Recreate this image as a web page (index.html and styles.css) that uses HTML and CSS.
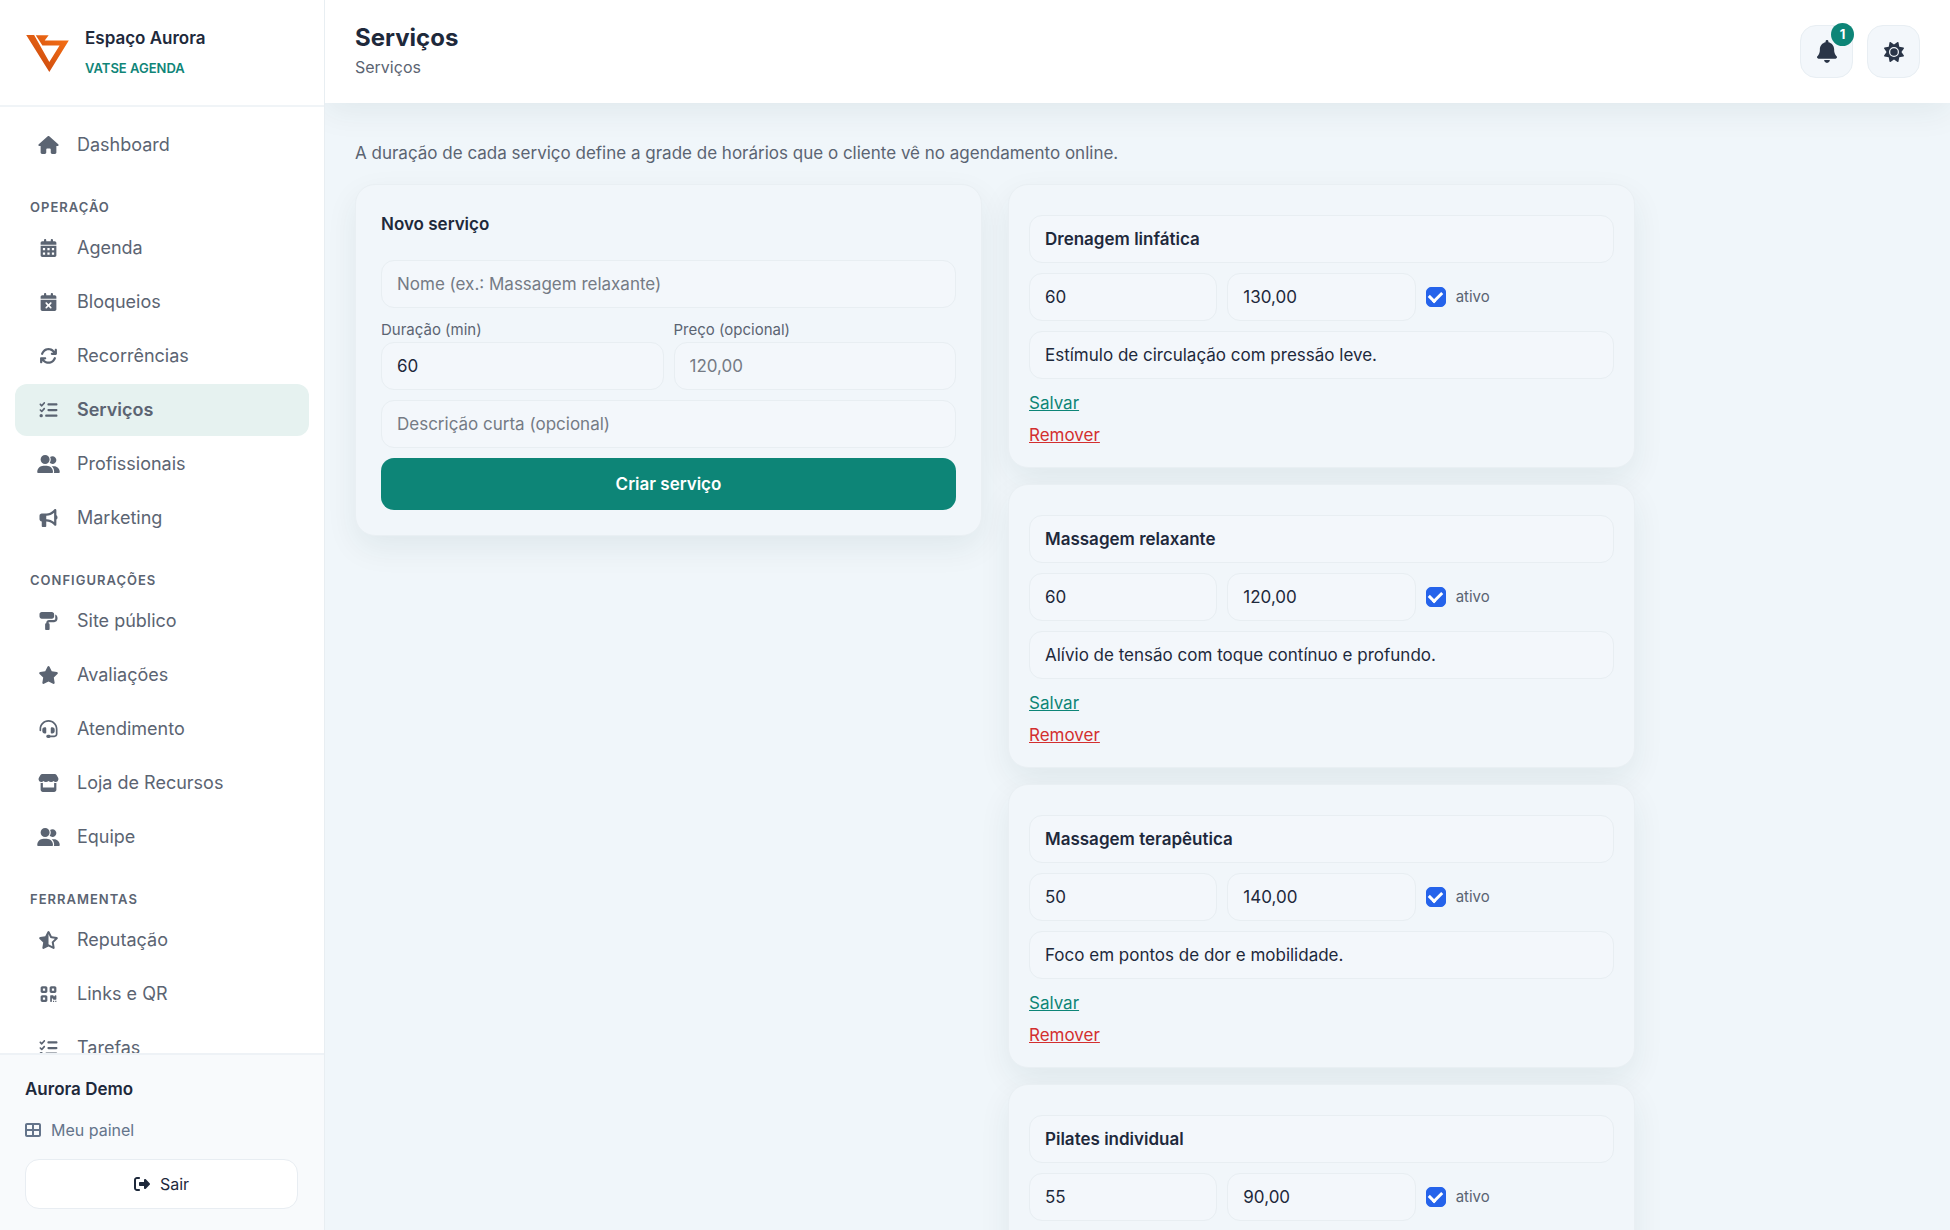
FILE: index.html
```html
<!DOCTYPE html>
<html lang="pt-BR">
<head>
  <meta charset="UTF-8" />
  <meta name="viewport" content="width=device-width, initial-scale=1" />
  <title>Serviços - Espaço Aurora</title>
  <link rel="stylesheet" href="styles.css">
</head>
<body>
  <!-- Icons -->
  <svg class="sprite" aria-hidden="true">
    <symbol id="i-home" viewBox="0 0 576 512"><path d="M575.8 255.5c0 18-15 32.1-32 32.1h-32l.7 160.2c0 2.7-.2 5.4-.5 8.1V472c0 22.1-17.9 40-40 40H392c-22.1 0-40-17.9-40-40V384c0-17.7-14.3-32-32-32H256c-17.7 0-32 14.3-32 32v88c0 22.1-17.9 40-40 40H104c-22.1 0-40-17.9-40-40V287.6H32c-18 0-32-14-32-32.1c0-9 3-17 10-24L266.4 8c7-7 15-8 22-8s15 2 21 7L564.8 231.5c8 7 12 15 11 24z"/></symbol>
    <symbol id="i-calendar" viewBox="0 0 448 512"><path fill-rule="evenodd" d="M128 0c17.7 0 32 14.3 32 32V64H288V32c0-17.7 14.3-32 32-32s32 14.3 32 32V64h48c26.5 0 48 21.5 48 48v48H0V112C0 85.5 21.5 64 48 64H96V32c0-17.7 14.3-32 32-32zM0 192H448V464c0 26.5-21.5 48-48 48H48c-26.5 0-48-21.5-48-48V192zM64 256v64h64v-64zM192 256v64h64v-64zM320 256v64h64v-64zM64 384v64h64v-64zM192 384v64h64v-64zM320 384v64h64v-64z"/></symbol>
    <symbol id="i-calendar-x" viewBox="0 0 448 512"><path fill-rule="evenodd" d="M128 0c17.7 0 32 14.3 32 32V64H288V32c0-17.7 14.3-32 32-32s32 14.3 32 32V64h48c26.5 0 48 21.5 48 48v48H0V112C0 85.5 21.5 64 48 64H96V32c0-17.7 14.3-32 32-32zM0 192H448V464c0 26.5-21.5 48-48 48H48c-26.5 0-48-21.5-48-48V192zM305 305c9.4-9.4 9.4-24.6 0-33.9s-24.6-9.4-33.9 0l-47 47-47-47c-9.4-9.4-24.6-9.4-33.9 0s-9.4 24.6 0 33.9l47 47-47 47c-9.4 9.4-9.4 24.6 0 33.9s24.6 9.4 33.9 0l47-47 47 47c9.4 9.4 24.6 9.4 33.9 0s9.4-24.6 0-33.9l-47-47 47-47z"/></symbol>
    <symbol id="i-rotate" viewBox="0 0 512 512"><path d="M105.1 202.6c7.7-21.8 20.2-42.3 37.8-59.8c62.5-62.5 163.8-62.5 226.3 0L386.3 160H352c-17.7 0-32 14.3-32 32s14.3 32 32 32H463.9c17.7 0 32-14.3 32-32V80c0-17.7-14.3-32-32-32s-32 14.3-32 32v35.2L414.4 97.6c-87.5-87.5-229.3-87.5-316.8 0C73.2 122 55.6 150.7 44.8 181.4c-5.9 16.7 2.9 34.9 19.5 40.8s34.9-2.9 40.8-19.5zM39 289.3c-5 1.5-9.8 4.2-13.7 8.2c-4 4-6.7 8.8-8.1 14c-.3 1.2-.6 2.5-.8 3.8c-.3 1.7-.4 3.4-.4 5.1V432c0 17.7 14.3 32 32 32s32-14.3 32-32V396.9l17.6 17.5c87.5 87.4 229.3 87.4 316.7 0c24.4-24.4 42.1-53.1 52.9-83.8c5.9-16.7-2.9-34.9-19.5-40.8s-34.9 2.9-40.8 19.5c-7.7 21.8-20.2 42.3-37.8 59.8c-62.5 62.5-163.8 62.5-226.3 0L125.6 352H160c17.7 0 32-14.3 32-32s-14.3-32-32-32H48.4c-1.6 0-3.2 .1-4.8 .3s-3.1 .5-4.6 1z"/></symbol>
    <symbol id="i-list" viewBox="0 0 512 512"><path d="M152.1 38.2c9.9 8.9 10.7 24 1.8 33.9l-72 80c-4.4 4.9-10.6 7.8-17.2 7.9s-12.9-2.4-17.6-7L7 113C-2.3 103.6-2.3 88.4 7 79s24.6-9.4 33.9 0l22.1 22.1 55.1-61.2c8.9-9.9 24-10.7 33.9-1.8zm0 160c9.9 8.9 10.7 24 1.8 33.9l-72 80c-4.4 4.9-10.6 7.8-17.2 7.9s-12.9-2.4-17.6-7L7 273c-9.4-9.4-9.4-24.6 0-33.9s24.6-9.4 33.9 0l22.1 22.1 55.1-61.2c8.9-9.9 24-10.7 33.9-1.8zM224 96c0-17.7 14.3-32 32-32H480c17.7 0 32 14.3 32 32s-14.3 32-32 32H256c-17.7 0-32-14.3-32-32zm0 160c0-17.7 14.3-32 32-32H480c17.7 0 32 14.3 32 32s-14.3 32-32 32H256c-17.7 0-32-14.3-32-32zM160 416c0-17.7 14.3-32 32-32H480c17.7 0 32 14.3 32 32s-14.3 32-32 32H192c-17.7 0-32-14.3-32-32zM48 368a48 48 0 1 1 0 96 48 48 0 1 1 0-96z"/></symbol>
    <symbol id="i-users" viewBox="0 0 640 512"><path d="M96 128a128 128 0 1 1 256 0A128 128 0 1 1 96 128zM0 482.3C0 383.8 79.8 304 178.3 304h91.4C368.2 304 448 383.8 448 482.3c0 16.4-13.3 29.7-29.7 29.7H29.7C13.3 512 0 498.7 0 482.3zM609.3 512H471.4c5.4-9.4 8.6-20.3 8.6-32v-8c0-60.7-27.1-115.2-69.8-151.8c2.4-.1 4.7-.2 7.1-.2h61.4C567.8 320 640 392.2 640 481.3c0 17-13.8 30.7-30.7 30.7zM432 256c-31 0-59-12.6-79.3-32.9C372.4 196.5 384 163.6 384 128c0-26.8-6.6-52.1-18.3-74.3C384.3 40.1 407.2 32 432 32c61.9 0 112 50.1 112 112s-50.1 112-112 112z"/></symbol>
    <symbol id="i-bullhorn" viewBox="0 0 512 512"><path d="M480 32c0-12.9-7.8-24.6-19.8-29.6s-25.7-2.2-34.9 6.9L381.7 53c-48 48-113.1 75-181 75H64c-35.3 0-64 28.7-64 64v96c0 35.3 28.7 64 64 64v128c0 17.7 14.3 32 32 32h64c17.7 0 32-14.3 32-32V352h8.7c67.9 0 133 27 181 75l43.6 43.6c9.2 9.2 22.9 11.9 34.9 6.9s19.8-16.6 19.8-29.6V300.4c18.6-8.8 32-32.5 32-60.4s-13.4-51.6-32-60.4V32zm-64 76.7V371.3C357.2 317.8 280.5 288 200.7 288H192V192h8.7c79.8 0 156.5-29.8 215.3-83.3z"/></symbol>
    <symbol id="i-roller" viewBox="0 0 512 512"><path d="M0 64C0 28.7 28.7 0 64 0H352c35.3 0 64 28.7 64 64v64c0 35.3-28.7 64-64 64H64c-35.3 0-64-28.7-64-64V64zM160 352c0-17.7 14.3-32 32-32V304c0-44.2 35.8-80 80-80H416c17.7 0 32-14.3 32-32V69.5c37.3 13.2 64 48.7 64 90.5v32c0 53-43 96-96 96H272c-8.8 0-16 7.2-16 16v16c17.7 0 32 14.3 32 32V480c0 17.7-14.3 32-32 32H192c-17.7 0-32-14.3-32-32V352z"/></symbol>
    <symbol id="i-star" viewBox="0 0 576 512"><path d="M316.9 18C311.6 7 300.4 0 288.1 0s-23.4 7-28.8 18L195 150.3 51.4 171.5c-12 1.8-22 10.2-25.7 21.7s-.7 24.2 7.9 32.7L137.8 329 113.2 474.7c-2 12 3 24.2 12.9 31.3s23 8 33.8 2.3l128.3-68.5 128.3 68.5c10.8 5.7 23.9 4.9 33.8-2.3s14.9-19.3 12.9-31.3L438.5 329 542.7 225.9c8.6-8.5 11.7-21.2 7.9-32.7s-13.7-19.9-25.7-21.7L381.2 150.3 316.9 18z"/></symbol>
    <symbol id="i-star-half" viewBox="0 0 576 512"><path fill-rule="evenodd" d="M316.9 18C311.6 7 300.4 0 288.1 0s-23.4 7-28.8 18L195 150.3 51.4 171.5c-12 1.8-22 10.2-25.7 21.7s-.7 24.2 7.9 32.7L137.8 329 113.2 474.7c-2 12 3 24.2 12.9 31.3s23 8 33.8 2.3l128.3-68.5 128.3 68.5c10.8 5.7 23.9 4.9 33.8-2.3s14.9-19.3 12.9-31.3L438.5 329 542.7 225.9c8.6-8.5 11.7-21.2 7.9-32.7s-13.7-19.9-25.7-21.7L381.2 150.3 316.9 18zM288 376.4l26.5 14 85.2 45.5-16.5-97.6-4.8-28.7 20.7-20.5 70.1-69.3-96.1-14.2-29.3-4.3-12.9-26.6L288 86.9z"/></symbol>
    <symbol id="i-headset" viewBox="0 0 512 512"><path d="M256 48C141.1 48 48 141.1 48 256v40c0 13.3-10.7 24-24 24s-24-10.7-24-24V256C0 114.6 114.6 0 256 0S512 114.6 512 256V400.1c0 48.6-39.4 88-88.1 88L313.6 488c-8.3 14.3-23.8 24-41.6 24H240c-26.5 0-48-21.5-48-48s21.5-48 48-48h32c17.8 0 33.3 9.7 41.6 24l110.4 .1c22.1 0 40-17.9 40-40V256c0-114.9-93.1-208-208-208zM144 208h16c17.7 0 32 14.3 32 32V352c0 17.7-14.3 32-32 32H144c-35.3 0-64-28.7-64-64V272c0-35.3 28.7-64 64-64zm224 0c35.3 0 64 28.7 64 64v48c0 35.3-28.7 64-64 64H352c-17.7 0-32-14.3-32-32V240c0-17.7 14.3-32 32-32h16z"/></symbol>
    <symbol id="i-store" viewBox="0 0 576 512"><path fill-rule="evenodd" d="M112 0H464c24 0 40 8 52 28l42 70c30 52 2 118-58 126c-28 3-52-8-68-26c-17 18-42 28-72 26c-28 0-53-10-72-28c-19 18-44 28-72 28c-30 2-55-8-72-26c-16 18-40 29-68 26c-60-8-88-74-58-126l42-70C72 8 88 0 112 0zM64 252c22 7 42 6 64 0V384H448V252c22 6 42 7 64 0V448c0 35-29 64-64 64H128c-35 0-64-29-64-64z"/></symbol>
    <symbol id="i-qr" viewBox="0 0 448 512"><path fill-rule="evenodd" d="M48 32h96c26 0 48 22 48 48v96c0 26-22 48-48 48H48c-26 0-48-22-48-48V80c0-26 22-48 48-48zM64 96v64h64V96zM304 32h96c26 0 48 22 48 48v96c0 26-22 48-48 48h-96c-26 0-48-22-48-48V80c0-26 22-48 48-48zM320 96v64h64V96zM48 288h96c26 0 48 22 48 48v96c0 26-22 48-48 48H48c-26 0-48-22-48-48v-96c0-26 22-48 48-48zM64 352v64h64v-64zM272 288h80c9 0 16 7 16 16v16h32v-16c0-9 7-16 16-16h16c9 0 16 7 16 16v96c0 9-7 16-16 16h-64c-9 0-16-7-16-16v-16h-32v80c0 9-7 16-16 16h-16c-9 0-16-7-16-16V304c0-9 7-16 16-16zM352 448h32v32h-32zM416 448h32v32h-32z"/></symbol>
    <symbol id="i-table" viewBox="0 0 512 512"><path fill-rule="evenodd" d="M448 96V224H288V96H448zm0 192V416H288V288H448zM224 224H64V96H224V224zM64 288H224V416H64V288zM64 32C28.7 32 0 60.7 0 96V416c0 35.3 28.7 64 64 64H448c35.3 0 64-28.7 64-64V96c0-35.3-28.7-64-64-64H64z"/></symbol>
    <symbol id="i-exit" viewBox="0 0 512 512"><path d="M377.9 105.9L500.7 228.7c7.2 7.2 11.3 17.1 11.3 27.3s-4.1 20.1-11.3 27.3L377.9 406.1c-6.4 6.4-15 9.9-24 9.9c-18.7 0-33.9-15.2-33.9-33.9l0-62.1-128 0c-17.7 0-32-14.3-32-32l0-64c0-17.7 14.3-32 32-32l128 0 0-62.1c0-18.7 15.2-33.9 33.9-33.9c9 0 17.6 3.6 24 9.9zM160 96L96 96c-17.7 0-32 14.3-32 32l0 256c0 17.7 14.3 32 32 32l64 0c17.7 0 32 14.3 32 32s-14.3 32-32 32l-64 0c-53 0-96-43-96-96L0 128C0 75 43 32 96 32l64 0c17.7 0 32 14.3 32 32s-14.3 32-32 32z"/></symbol>
    <symbol id="i-bell" viewBox="0 0 448 512"><path d="M224 0c-17.7 0-32 14.3-32 32V51.2C119 66 64 130.6 64 208v18.8c0 47-17.3 92.4-48.5 127.6l-7.4 8.3c-8.4 9.4-10.4 22.9-5.3 34.4S19.4 416 32 416H416c12.6 0 24-7.4 29.2-18.9s3.1-25-5.3-34.4l-7.4-8.3C401.3 319.2 384 273.9 384 226.8V208c0-77.4-55-142-128-156.8V32c0-17.7-14.3-32-32-32zm45.3 493.3c12-12 18.7-28.3 18.7-45.3H160c0 17 6.7 33.3 18.7 45.3s28.3 18.7 45.3 18.7s33.3-6.7 45.3-18.7z"/></symbol>
    <symbol id="i-sun" viewBox="0 0 512 512"><path d="M361.5 1.2c5 2.1 8.6 6.6 9.6 11.9L391 121l107.9 19.8c5.3 1 9.8 4.6 11.9 9.6s1.5 10.7-1.6 15.2L446.9 256l62.3 90.3c3.1 4.5 3.7 10.2 1.6 15.2s-6.6 8.6-11.9 9.6L391 391 371.1 498.9c-1 5.3-4.6 9.8-9.6 11.9s-10.7 1.5-15.2-1.6L256 446.9l-90.3 62.3c-4.5 3.1-10.2 3.7-15.2 1.6s-8.6-6.6-9.6-11.9L121 391 13.1 371.1c-5.3-1-9.8-4.6-11.9-9.6s-1.5-10.7 1.6-15.2L65.1 256 2.8 165.7c-3.1-4.5-3.7-10.2-1.6-15.2s6.6-8.6 11.9-9.6L121 121 140.9 13.1c1-5.3 4.6-9.8 9.6-11.9s10.7-1.5 15.2 1.6L256 65.1 346.3 2.8c4.5-3.1 10.2-3.7 15.2-1.6zM160 256a96 96 0 1 1 192 0 96 96 0 1 1 -192 0zm224 0a128 128 0 1 0 -256 0 128 128 0 1 0 256 0z"/></symbol>
  </svg>

  <div class="app">
    <aside class="sidebar">
      <div class="brand">
        <svg class="logo" viewBox="0 0 129 112" aria-hidden="true">
          <defs>
            <linearGradient id="logoFill" x1="1" y1="0" x2="0" y2="1">
              <stop offset="0" stop-color="#f97316"/>
              <stop offset="1" stop-color="#c2410c"/>
            </linearGradient>
          </defs>
          <path fill="url(#logoFill)" d="M0 0H24L70 82L101 32H49L29 1H68L56 17H129L70 112Z"/>
        </svg>
        <div class="brand-text">
          <strong>Espaço Aurora</strong>
          <span>VATSE AGENDA</span>
        </div>
      </div>

      <nav class="nav">
        <a href="#"><svg><use href="#i-home"/></svg>Dashboard</a>

        <h2>OPERAÇÃO</h2>
        <a href="#"><svg><use href="#i-calendar"/></svg>Agenda</a>
        <a href="#"><svg><use href="#i-calendar-x"/></svg>Bloqueios</a>
        <a href="#"><svg><use href="#i-rotate"/></svg>Recorrências</a>
        <a href="#" class="active"><svg><use href="#i-list"/></svg>Serviços</a>
        <a href="#"><svg><use href="#i-users"/></svg>Profissionais</a>
        <a href="#"><svg><use href="#i-bullhorn"/></svg>Marketing</a>

        <h2>CONFIGURAÇÕES</h2>
        <a href="#"><svg><use href="#i-roller"/></svg>Site público</a>
        <a href="#"><svg><use href="#i-star"/></svg>Avaliações</a>
        <a href="#"><svg><use href="#i-headset"/></svg>Atendimento</a>
        <a href="#"><svg><use href="#i-store"/></svg>Loja de Recursos</a>
        <a href="#"><svg><use href="#i-users"/></svg>Equipe</a>

        <h2>FERRAMENTAS</h2>
        <a href="#"><svg><use href="#i-star-half"/></svg>Reputação</a>
        <a href="#"><svg><use href="#i-qr"/></svg>Links e QR</a>
        <a href="#"><svg><use href="#i-list"/></svg>Tarefas</a>
      </nav>

      <div class="user">
        <strong>Aurora Demo</strong>
        <a href="#"><svg><use href="#i-table"/></svg>Meu painel</a>
        <button type="button"><svg><use href="#i-exit"/></svg>Sair</button>
      </div>
    </aside>

    <div class="page">
      <header class="topbar">
        <div>
          <h1>Serviços</h1>
          <p>Serviços</p>
        </div>
        <div class="actions">
          <button type="button" class="icon-btn" aria-label="Notificações">
            <svg class="bell"><use href="#i-bell"/></svg>
            <span class="badge">1</span>
          </button>
          <button type="button" class="icon-btn" aria-label="Tema">
            <svg><use href="#i-sun"/></svg>
          </button>
        </div>
      </header>

      <main class="content">
        <p class="intro">A duração de cada serviço define a grade de horários que o cliente vê no agendamento online.</p>

        <div class="columns">
          <form class="card new-service">
            <h2>Novo serviço</h2>
            <input type="text" aria-label="Nome" placeholder="Nome (ex.: Massagem relaxante)">
            <div class="pair">
              <label>Duração (min)
                <input type="text" inputmode="numeric" value="60">
              </label>
              <label>Preço (opcional)
                <input type="text" placeholder="120,00">
              </label>
            </div>
            <input type="text" aria-label="Descrição" placeholder="Descrição curta (opcional)">
            <button type="submit" class="primary">Criar serviço</button>
          </form>

          <div class="services">
            <form class="card service">
              <input type="text" class="name" aria-label="Nome" value="Drenagem linfática">
              <div class="row">
                <input type="text" aria-label="Duração" value="60">
                <input type="text" aria-label="Preço" value="130,00">
                <label class="check"><input type="checkbox" checked>ativo</label>
              </div>
              <input type="text" aria-label="Descrição" value="Estímulo de circulação com pressão leve.">
              <button type="submit" class="link save">Salvar</button>
              <button type="button" class="link remove">Remover</button>
            </form>

            <form class="card service">
              <input type="text" class="name" aria-label="Nome" value="Massagem relaxante">
              <div class="row">
                <input type="text" aria-label="Duração" value="60">
                <input type="text" aria-label="Preço" value="120,00">
                <label class="check"><input type="checkbox" checked>ativo</label>
              </div>
              <input type="text" aria-label="Descrição" value="Alívio de tensão com toque contínuo e profundo.">
              <button type="submit" class="link save">Salvar</button>
              <button type="button" class="link remove">Remover</button>
            </form>

            <form class="card service">
              <input type="text" class="name" aria-label="Nome" value="Massagem terapêutica">
              <div class="row">
                <input type="text" aria-label="Duração" value="50">
                <input type="text" aria-label="Preço" value="140,00">
                <label class="check"><input type="checkbox" checked>ativo</label>
              </div>
              <input type="text" aria-label="Descrição" value="Foco em pontos de dor e mobilidade.">
              <button type="submit" class="link save">Salvar</button>
              <button type="button" class="link remove">Remover</button>
            </form>

            <form class="card service">
              <input type="text" class="name" aria-label="Nome" value="Pilates individual">
              <div class="row">
                <input type="text" aria-label="Duração" value="55">
                <input type="text" aria-label="Preço" value="90,00">
                <label class="check"><input type="checkbox" checked>ativo</label>
              </div>
              <input type="text" aria-label="Descrição">
              <button type="submit" class="link save">Salvar</button>
              <button type="button" class="link remove">Remover</button>
            </form>
          </div>
        </div>
      </main>
    </div>
  </div>
</body>
</html>
```
FILE: styles.css
```css
* {
  box-sizing: border-box;
}

body {
  margin: 0;
  background: #f0f6fa;
  color: #1e293b;
  font-family: Inter, "Open Sans", sans-serif;
  font-size: 17px;
  line-height: 24px;
}

h1, h2, p {
  margin: 0;
}

button, input {
  font: inherit;
  color: inherit;
}

button {
  cursor: pointer;
}

svg {
  fill: currentColor;
}

.sprite {
  display: none;
}

.app {
  display: flex;
  height: 100vh;
}

/* Sidebar */
.sidebar {
  display: flex;
  flex-direction: column;
  flex: 0 0 325px;
  z-index: 2;
  background: #fff;
  border-right: 1px solid #e8eef2;
}

.brand {
  display: flex;
  align-items: center;
  gap: 16px;
  padding: 26px 26px 25px;
  border-bottom: 2px solid #f0f4f7;
}

.logo {
  width: 43px;
  height: 37px;
}

.brand-text {
  display: flex;
  flex-direction: column;
  gap: 6px;
}

.brand strong {
  font-weight: 600;
}

.brand span {
  color: #0f8578;
  font-size: 13px;
  font-weight: 600;
}

.nav {
  flex: 1;
  min-height: 0;
  overflow-y: auto;
  scrollbar-width: none;
  padding: 12px 15px;
}

.nav a {
  display: flex;
  align-items: center;
  gap: 17px;
  height: 52px;
  margin-bottom: 2px;
  padding: 0 22px;
  border-radius: 12px;
  color: #5b6472;
  font-size: 18px;
  text-decoration: none;
}

.nav a.active {
  background: #e6f2f0;
  font-weight: 600;
}

.nav svg {
  width: 23px;
  height: 18px;
}

.nav h2 {
  padding: 22px 15px 3px;
  color: #5b6472;
  font-size: 13px;
  font-weight: 600;
  letter-spacing: 1px;
}

.user {
  display: flex;
  flex-direction: column;
  gap: 17px;
  padding: 22px 26px 21px 25px;
  background: #f8fafc;
  border-top: 2px solid #eef2f6;
}

.user strong {
  font-weight: 600;
}

.user a {
  display: flex;
  align-items: center;
  gap: 10px;
  color: #64748b;
  font-size: 16px;
  text-decoration: none;
}

.user svg {
  width: 16px;
  height: 16px;
}

.user button {
  display: flex;
  align-items: center;
  justify-content: center;
  gap: 10px;
  height: 50px;
  background: #fff;
  border: 1px solid #e8edf2;
  border-radius: 14px;
  font-size: 16px;
}

/* Top bar */
.page {
  display: flex;
  flex-direction: column;
  flex: 1;
  min-width: 0;
}

.topbar {
  display: flex;
  align-items: center;
  justify-content: space-between;
  z-index: 1;
  padding: 22px 30px;
  background: #fff;
  box-shadow: 0 8px 32px rgba(15, 60, 60, 0.07);
}

.topbar h1 {
  font-size: 24px;
  font-weight: 700;
  line-height: 32px;
}

.topbar p {
  color: #5b6472;
  font-size: 16px;
  line-height: 27px;
}

.actions {
  display: flex;
  gap: 14px;
}

.icon-btn {
  position: relative;
  display: flex;
  align-items: center;
  justify-content: center;
  width: 53px;
  height: 53px;
  padding: 0;
  background: #f3f7fb;
  border: 1px solid #e8eef3;
  border-radius: 16px;
  color: #2a3547;
}

.icon-btn svg {
  width: 20px;
  height: 20px;
}

.icon-btn .bell {
  height: 23px;
}

.badge {
  position: absolute;
  top: -3px;
  right: -2px;
  width: 23px;
  height: 23px;
  border-radius: 50%;
  background: #0d8577;
  color: #fff;
  font-size: 13px;
  font-weight: 700;
  line-height: 23px;
}

/* Content */
.content {
  flex: 1;
  min-height: 0;
  overflow-y: auto;
  scrollbar-width: none;
  padding: 38px 30px;
}

.intro {
  margin-bottom: 19px;
  color: #5b6472;
}

.columns {
  display: grid;
  grid-template-columns: 1fr 1fr;
  align-items: start;
  gap: 26px;
  max-width: 1280px;
}

.card {
  display: flex;
  flex-direction: column;
  gap: 10px;
  background: #f1f6fa;
  border: 1px solid #e9eff3;
  border-radius: 20px;
  box-shadow: 0 12px 32px rgba(15, 50, 50, 0.07);
}

.card input[type="text"] {
  width: 100%;
  min-width: 0;
  height: 48px;
  padding: 0 15px;
  background: #f3f7fb;
  border: 1px solid #e8eef2;
  border-radius: 13px;
}

.card input::placeholder {
  color: #757b85;
}

.new-service {
  padding: 25px;
}

.new-service h2 {
  margin: 2px 0 14px;
  font-size: 17px;
  font-weight: 600;
}

.pair {
  display: grid;
  grid-template-columns: 1fr 1fr;
  gap: 10px;
}

.pair label {
  color: #5b6472;
  font-size: 15px;
}

.pair input {
  color: #1e293b;
  font-size: 17px;
}

.primary {
  height: 52px;
  background: #0d8577;
  border: 0;
  border-radius: 13px;
  color: #fff;
  font-weight: 600;
}

.services {
  display: flex;
  flex-direction: column;
  gap: 16px;
}

.service {
  padding: 30px 20px 20px;
}

.service .name {
  font-weight: 600;
}

.row {
  display: grid;
  grid-template-columns: repeat(3, 1fr);
  align-items: center;
  gap: 10px;
}

.check {
  display: flex;
  align-items: center;
  gap: 10px;
  color: #5b6472;
  font-size: 15px;
}

.check input {
  appearance: none;
  display: flex;
  align-items: center;
  justify-content: center;
  width: 20px;
  height: 20px;
  margin: 0;
  border: 1px solid #94a3b8;
  border-radius: 5px;
}

.check input:checked {
  background: #2563eb;
  border-color: #2563eb;
}

.check input:checked::after {
  content: "";
  width: 6px;
  height: 10px;
  margin-bottom: 3px;
  border: solid #fff;
  border-width: 0 3px 3px 0;
  transform: rotate(45deg);
}

.link {
  align-self: flex-start;
  padding: 0;
  background: none;
  border: 0;
  text-decoration: underline;
}

.save {
  margin-top: 2px;
  color: #0d8577;
}

.remove {
  margin-top: -2px;
  color: #d32f2f;
}
```
